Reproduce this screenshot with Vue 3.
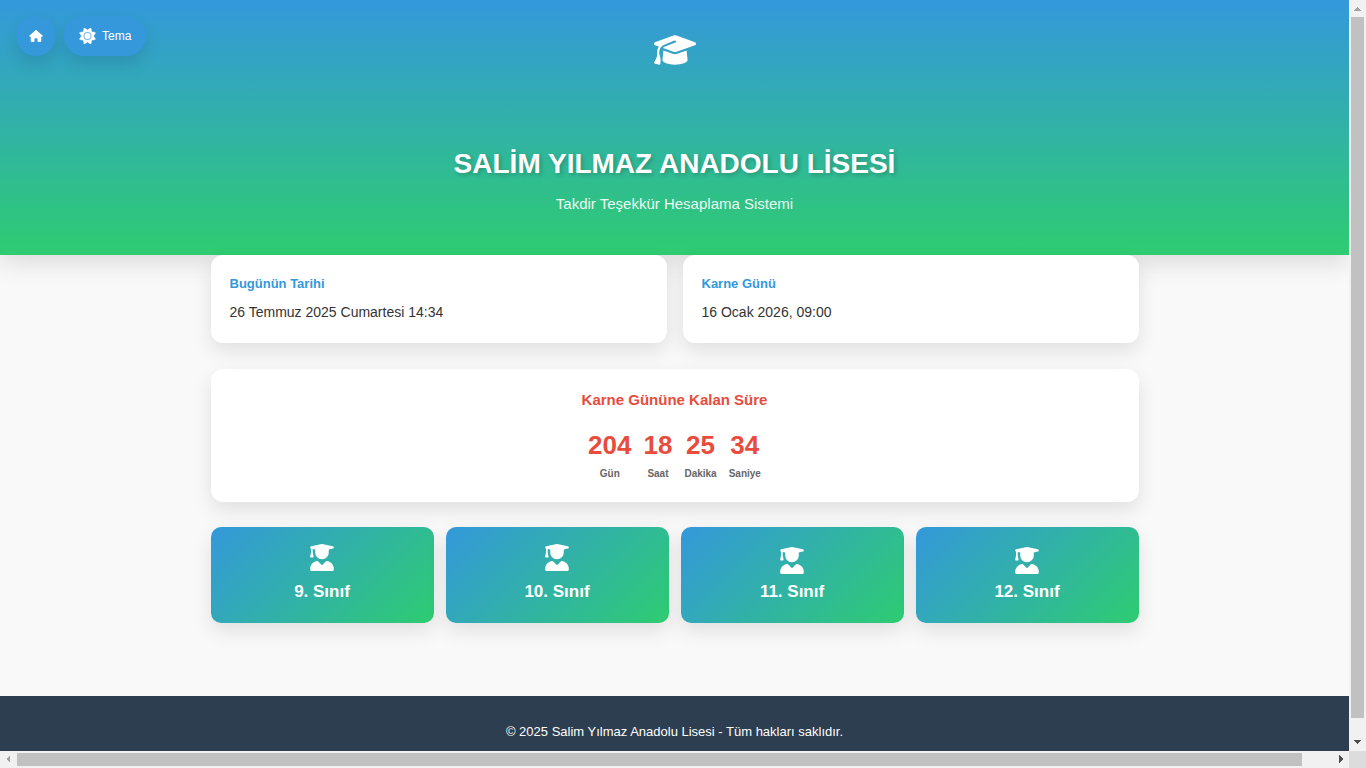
<script setup>
const infoCards = [
  { title: 'Bugünün Tarihi', value: '26 Temmuz 2025 Cumartesi 14:34' },
  { title: 'Karne Günü', value: '16 Ocak 2026, 09:00' }
]

const countdown = [
  { value: '204', label: 'Gün' },
  { value: '18', label: 'Saat' },
  { value: '25', label: 'Dakika' },
  { value: '34', label: 'Saniye' }
]

const grades = [
  { name: '9. Sınıf', raised: true },
  { name: '10. Sınıf', raised: true },
  { name: '11. Sınıf', raised: false },
  { name: '12. Sınıf', raised: false }
]
</script>

<template>
  <div class="frame">
    <div class="page">
      <nav class="toolbar">
        <button class="tool round" type="button" aria-label="Ana sayfa">
          <svg class="home-icon" viewBox="0 0 576 512" aria-hidden="true">
            <path d="M575.8 255.5c0 18-15 32.1-32 32.1h-32l.7 160.2c0 2.7-.2 5.4-.5 8.1V472c0 22.1-17.9 40-40 40H456c-1.1 0-2.2 0-3.3-.1c-1.4 .1-2.8 .1-4.2 .1H416 392c-22.1 0-40-17.9-40-40V448 384c0-17.7-14.3-32-32-32H256c-17.7 0-32 14.3-32 32v64 24c0 22.1-17.9 40-40 40H160 128.1c-1.5 0-3-.1-4.5-.2c-1.2 .1-2.4 .2-3.6 .2H104c-22.1 0-40-17.9-40-40V360c0-.9 0-1.9 .1-2.8V287.6H32c-18 0-32-14-32-32.1c0-9 3-17 10-24L266.4 8c7-7 15-8 22-8s15 2 21 7L564.8 231.5c8 7 12 15 11 24z" />
          </svg>
        </button>
        <button class="tool" type="button">
          <svg class="sun-icon" viewBox="0 0 512 512" aria-hidden="true">
            <path d="M361.5 1.2c5 2.1 8.6 6.6 9.6 11.9L391 121l107.9 19.8c5.3 1 9.8 4.6 11.9 9.6s1.5 10.7-1.6 15.2L446.9 256l62.3 90.3c3.1 4.5 3.7 10.2 1.6 15.2s-6.6 8.6-11.9 9.6L391 391 371.1 498.9c-1 5.3-4.6 9.8-9.6 11.9s-10.7 1.5-15.2-1.6L256 446.9l-90.3 62.3c-4.5 3.1-10.2 3.7-15.2 1.6s-8.6-6.6-9.6-11.9L121 391 13.1 371.1c-5.3-1-9.8-4.6-11.9-9.6s-1.5-10.7 1.6-15.2L65.1 256 2.8 165.7c-3.1-4.5-3.7-10.2-1.6-15.2s6.6-8.6 11.9-9.6L121 121 140.9 13.1c1-5.3 4.6-9.8 9.6-11.9s10.7-1.5 15.2 1.6L256 65.1 346.3 2.8c4.5-3.1 10.2-3.7 15.2-1.6zM160 256a96 96 0 1 1 192 0 96 96 0 1 1 -192 0zm224 0a128 128 0 1 0 -256 0 128 128 0 1 0 256 0z" />
          </svg>
          <span>Tema</span>
        </button>
      </nav>

      <header class="hero">
        <svg class="cap-icon" viewBox="0 0 640 512" aria-hidden="true">
          <path d="M320 32c-8.1 0-16.1 1.4-23.7 4.1L15.8 137.4C6.3 140.9 0 149.9 0 160s6.3 19.1 15.8 22.6l57.9 20.9C57.3 229.3 48 259.8 48 291.9v28.1c0 28.4-10.8 57.7-22.3 80.8c-6.5 13-13.9 25.8-22.5 37.6C0 442.7-.9 448.3 .9 453.4s6 8.9 11.2 10.2l64 16c4.2 1.1 8.7 .3 12.4-2s6.3-6.1 7.1-10.4c8.6-42.8 4.3-81.2-2.1-108.7C90.3 344.3 86 329.8 80 316.5V291.9c0-30.2 10.2-58.7 27.9-81.5c12.9-15.5 29.6-28 49.2-35.7l157-61.7c8.2-3.2 17.5 .8 20.7 9s-.8 17.5-9 20.7l-157 61.7c-12.4 4.9-23.3 12.4-32.2 21.6l159.6 57.6c7.6 2.7 15.6 4.1 23.7 4.1s16.1-1.4 23.7-4.1L624.2 182.6c9.5-3.4 15.8-12.5 15.8-22.6s-6.3-19.1-15.8-22.6L343.7 36.1C336.1 33.4 328.1 32 320 32zM128 408c0 35.3 86 72 192 72s192-36.7 192-72L496.7 262.6 354.5 314c-11.1 4-22.8 6-34.5 6s-23.5-2-34.5-6L143.3 262.6 128 408z" />
        </svg>
        <h1>SALİM YILMAZ ANADOLU LİSESİ</h1>
        <p>Takdir Teşekkür Hesaplama Sistemi</p>
      </header>

      <main class="content">
        <section class="info-row">
          <article v-for="card in infoCards" :key="card.title" class="card info">
            <h2>{{ card.title }}</h2>
            <p>{{ card.value }}</p>
          </article>
        </section>

        <section class="card countdown">
          <h2>Karne Gününe Kalan Süre</h2>
          <div class="units">
            <div v-for="unit in countdown" :key="unit.label" class="unit">
              <strong>{{ unit.value }}</strong>
              <span>{{ unit.label }}</span>
            </div>
          </div>
        </section>

        <section class="grades">
          <a v-for="grade in grades" :key="grade.name" href="#" class="grade">
            <span class="icon-slot" :class="{ raised: grade.raised }">
              <svg viewBox="0 0 448 512" aria-hidden="true">
                <path d="M219.3 .5c3.1-.6 6.3-.6 9.4 0l200 40C439.9 42.7 448 52.6 448 64s-8.1 21.3-19.3 23.5L352 102.9V160c0 70.7-57.3 128-128 128s-128-57.3-128-128V102.9L48 93.3v65.1l15.7 78.4c.9 4.7-.3 9.6-3.3 13.3s-7.6 5.9-12.4 5.9H16c-4.8 0-9.3-2.1-12.4-5.9s-4.3-8.6-3.3-13.3L16 158.4V86.6C6.5 83.3 0 74.3 0 64C0 52.6 8.1 42.7 19.3 40.5l200-40zM129 323c8-2 14 0 19 5l66 67c6 6 14 6 20 0l66-67c5-5 11-7 19-5C392 333 448 396 448 470v12c0 17-13.8 30-30.7 30H30.7C13.8 512 0 499 0 482v-12c0-74 56-137 129-147z" />
              </svg>
            </span>
            <span>{{ grade.name }}</span>
          </a>
        </section>
      </main>

      <footer class="footer">© 2025 Salim Yılmaz Anadolu Lisesi - Tüm hakları saklıdır.</footer>
    </div>

    <div class="bar vertical" aria-hidden="true">
      <svg class="arrow" viewBox="0 0 17 17"><path class="dim" d="M4 11h8L8 7z" /></svg>
      <div class="track"><div class="thumb"></div></div>
      <svg class="arrow" viewBox="0 0 17 17"><path d="M4 6h8L8 10z" /></svg>
    </div>
    <div class="bar horizontal" aria-hidden="true">
      <svg class="arrow" viewBox="0 0 17 17"><path class="dim" d="M10 4v8L6 8z" /></svg>
      <div class="track"><div class="thumb"></div></div>
      <svg class="arrow" viewBox="0 0 17 17"><path d="M7 4v8l4-4z" /></svg>
    </div>
    <div class="corner"></div>
  </div>
</template>

<style>
body {
  margin: 0;
}
</style>

<style scoped>
.frame {
  display: grid;
  grid-template-columns: minmax(0, 1fr) 17px;
  grid-template-rows: minmax(0, 1fr) 17px;
  height: 100vh;
  overflow: hidden;
  font-family: "Liberation Sans", Arial, sans-serif;
  color: #333;
}

.page {
  position: relative;
  display: flex;
  flex-direction: column;
  overflow: hidden;
  background: #f9f9f9;
}

h1,
h2,
p {
  margin: 0;
}

svg {
  display: block;
  fill: currentColor;
}

.toolbar {
  position: absolute;
  top: 16px;
  left: 16px;
  z-index: 2;
  display: flex;
  gap: 8px;
}

.tool {
  display: flex;
  align-items: center;
  justify-content: center;
  gap: 6px;
  height: 40px;
  padding: 0 15px;
  border: 0;
  border-radius: 20px;
  background: #3498db;
  color: #fff;
  font-family: inherit;
  font-size: 12px;
  box-shadow: 0 8px 16px rgba(0, 0, 0, 0.1);
  cursor: pointer;
}

.round {
  width: 40px;
  padding: 0;
}

.home-icon {
  width: 14px;
  height: 12px;
}

.sun-icon {
  width: 17px;
  height: 16px;
  stroke: currentColor;
  stroke-width: 12px;
}

.hero {
  flex: none;
  display: flex;
  flex-direction: column;
  align-items: center;
  padding: 33px 16px 41px;
  background: linear-gradient(to bottom, #3498db, #2ecc71);
  box-shadow: 0 8px 24px rgba(0, 0, 0, 0.12);
  color: #fff;
  text-align: center;
}

.cap-icon {
  width: 42px;
  height: 34px;
}

.hero h1 {
  margin-top: 81px;
  font-size: 28px;
  line-height: 32px;
  text-shadow: 2px 2px 4px rgba(0, 0, 0, 0.2);
}

.hero p {
  margin-top: 14px;
  font-size: 15px;
  line-height: 20px;
  opacity: 0.9;
}

.content {
  position: relative;
  flex: 1;
  display: flex;
  flex-direction: column;
  box-sizing: border-box;
  width: 100%;
  max-width: 928px;
  margin: 0 auto;
}

.card {
  border-radius: 12px;
  background: #fff;
  box-shadow: 0 8px 20px rgba(0, 0, 0, 0.1);
}

.info-row {
  display: grid;
  grid-template-columns: 1fr 1fr;
  gap: 16px;
  margin-bottom: 26px;
}

.info {
  padding: 19px 19px 21px;
}

.info h2 {
  color: #3498db;
  font-size: 13px;
  line-height: 20px;
}

.info p {
  margin-top: 8px;
  font-size: 14px;
  line-height: 20px;
}

.countdown {
  margin-bottom: 25px;
  padding: 21px 19px 20px;
  text-align: center;
}

.countdown h2 {
  color: #e74c3c;
  font-size: 15px;
  line-height: 20px;
}

.units {
  display: flex;
  justify-content: center;
  gap: 12px;
  margin-top: 19px;
}

.unit strong,
.unit span {
  display: block;
}

.unit strong {
  color: #e74c3c;
  font-size: 26px;
  line-height: 32px;
}

.unit span {
  margin-top: 5px;
  color: #666;
  font-size: 10px;
  font-weight: 700;
  line-height: 16px;
}

.grades {
  display: grid;
  grid-template-columns: repeat(4, 1fr);
  gap: 12px;
}

.grade {
  display: flex;
  flex-direction: column;
  align-items: center;
  gap: 7px;
  padding: 17px 12px 20px;
  border-radius: 10px;
  background: linear-gradient(135deg, #3498db, #2ecc71);
  box-shadow: 0 8px 20px rgba(0, 0, 0, 0.1);
  color: #fff;
  font-size: 17px;
  font-weight: 700;
  line-height: 22px;
  text-decoration: none;
}

.icon-slot {
  display: flex;
  align-items: flex-end;
  height: 30px;
}

.icon-slot.raised {
  align-items: flex-start;
}

.icon-slot svg {
  width: 24px;
  height: 27px;
}

.footer {
  flex: none;
  padding: 26px 16px 9px;
  background: #2c3e50;
  color: #fff;
  font-size: 13px;
  line-height: 20px;
  text-align: center;
}

.bar {
  display: flex;
  background: #f1f1f1;
}

.vertical {
  flex-direction: column;
}

.arrow {
  flex: none;
  width: 17px;
  height: 17px;
  fill: #505050;
  shape-rendering: crispEdges;
}

.dim {
  fill: #a3a3a3;
}

.track {
  flex: 1;
  padding: 0 2px;
}

.horizontal .track {
  padding: 2px 0;
}

.thumb {
  height: 97.7%;
  background: #c1c1c1;
}

.horizontal .thumb {
  width: 97.7%;
  height: 100%;
}

.corner {
  background: #dcdcdc;
}
</style>
